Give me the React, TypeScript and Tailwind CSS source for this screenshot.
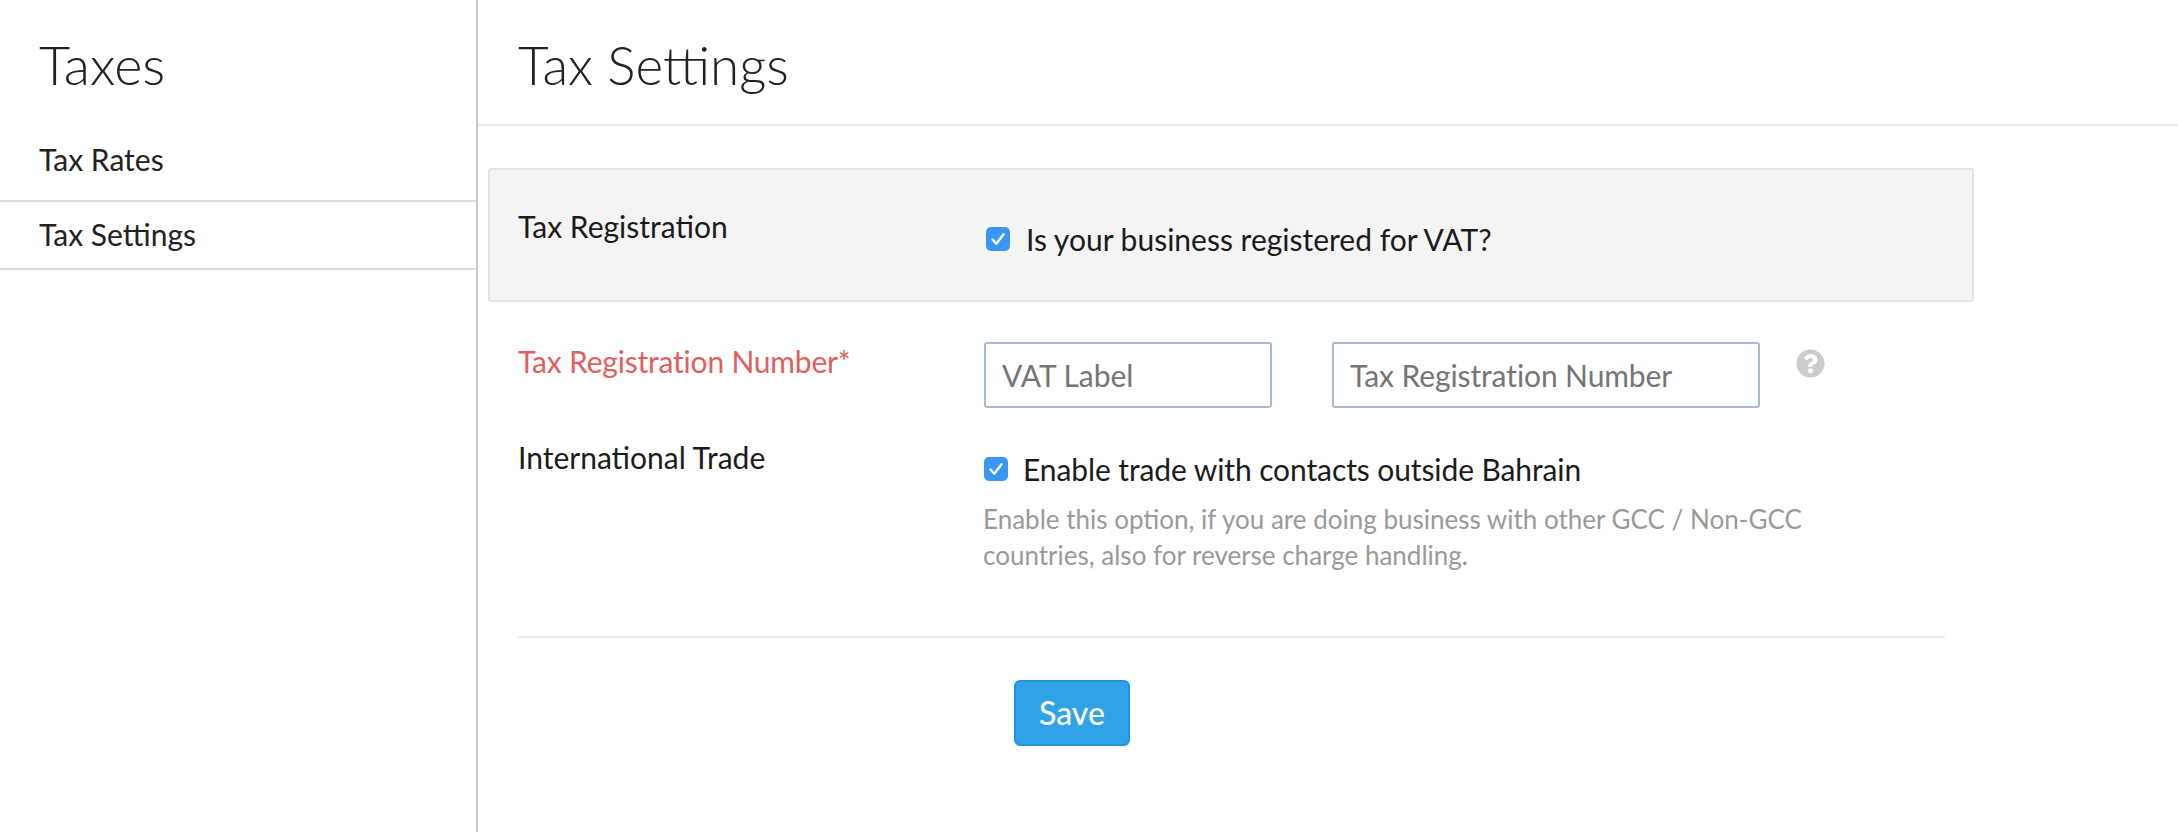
import { FaQuestionCircle } from 'react-icons/fa'

function CheckBox({ size }: { size: string }) {
  return (
    <span className={`${size} flex shrink-0 items-center justify-center rounded-[5px] bg-[#3a96f5]`}>
      <svg viewBox="0 0 24 24" className="h-full w-full" fill="none">
        <path d="M6.5 12.5l3.8 4.2 7.2-9.4" stroke="#fff" strokeWidth="2.4" strokeLinecap="round" strokeLinejoin="round" />
      </svg>
    </span>
  )
}

export default function App() {
  return (
    <div className="flex h-[832px] w-[2178px] overflow-hidden bg-white font-['Lato',sans-serif] text-[#1b1b1b]">
      {/* Sidebar */}
      <aside className="w-[478px] shrink-0 border-r-2 border-[#c9c9c9]">
        <h1 className="pl-[39px] pt-[34px] text-[54px] leading-[62px] font-light text-[#222]">Taxes</h1>
        <ul className="mt-[40px] text-[30px] text-[#222]">
          <li className="flex h-[66px] items-center border-b-2 border-[#dedede] pb-[18px] pl-[39px]">Tax Rates</li>
          <li className="flex h-[68px] items-center border-b-2 border-[#dedede] pb-[2px] pl-[39px]">Tax Settings</li>
        </ul>
      </aside>

      {/* Main */}
      <main className="flex-1">
        <header className="h-[126px] border-b-2 border-[#ebebeb] pl-[40px] pt-[34px]">
          <h2 className="text-[53px] leading-[62px] font-light text-[#222]">Tax Settings</h2>
        </header>

        <section className="ml-[10px] mt-[42px] flex h-[134px] w-[1486px] rounded-[3px] border-2 border-[#e3e3e3] bg-[#f4f4f4] pl-[28px]">
          <div className="w-[466px] pt-[38px] text-[30px] leading-[36px]">Tax Registration</div>
          <div className="flex items-center gap-[16px] self-start pl-[2px] pt-[51px]">
            <CheckBox size="h-[24px] w-[24px]" />
            <span className="text-[30px] leading-[36px]">Is your business registered for VAT?</span>
          </div>
        </section>

        <div className="ml-[40px] mt-[40px] flex">
          <div className="w-[466px] pt-[1px] text-[30px] leading-[36px] tracking-[-0.2px] text-[#e06060]">Tax Registration Number*</div>
          <input
            placeholder="VAT Label"
            className="h-[66px] w-[288px] rounded-[3px] border-2 border-[#a9bbd3] px-[16px] text-[30px] outline-none placeholder:text-[#757575]"
          />
          <input
            placeholder="Tax Registration Number"
            className="ml-[60px] h-[66px] w-[428px] rounded-[3px] border-2 border-[#a9bbd3] px-[16px] text-[30px] tracking-[-0.1px] outline-none placeholder:text-[#757575]"
          />
          <FaQuestionCircle className="ml-[36px] mt-[7px] h-[29px] w-[29px] text-[#cccccc]" />
        </div>

        <div className="ml-[40px] mt-[31px] flex">
          <div className="w-[466px] text-[30px] leading-[36px]">International Trade</div>
          <div className="w-[830px] pt-[12px]">
            <div className="flex items-center gap-[15px]">
              <CheckBox size="h-[24px] w-[24px]" />
              <span className="text-[30px] leading-[36px] tracking-[-0.1px]">Enable trade with contacts outside Bahrain</span>
            </div>
            <p className="-ml-[1px] mt-[14px] text-[26px] leading-[36px] text-[#9a9a9a]">
              Enable this option, if you are doing business with other GCC / Non-GCC
              <br />
              countries, also for reverse charge handling.
            </p>
          </div>
        </div>

        <div className="ml-[40px] mt-[63px] w-[1427px] border-t-2 border-[#ececec]" />

        <button className="ml-[536px] mt-[42px] h-[66px] w-[116px] rounded-[6px] border-2 border-[#1f97dd] bg-[#30a3e8] text-[32px] font-medium text-white">
          Save
        </button>
      </main>
    </div>
  )
}
